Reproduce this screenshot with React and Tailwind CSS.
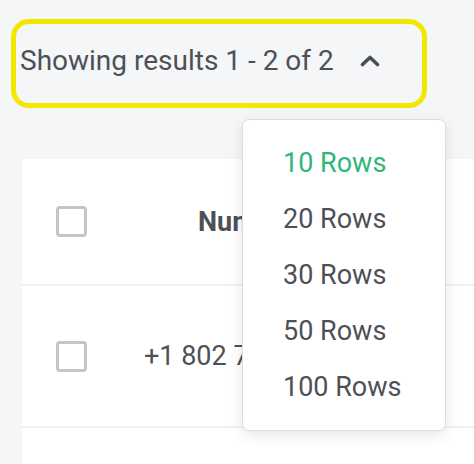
import { useState } from 'react';

const rowOptions = [10, 20, 30, 50, 100];

function Checkbox() {
    return <span className="block h-[31px] w-[31px] shrink-0 rounded-[4px] border-[3px] border-[#c3c5c9] bg-white" />;
}

function ChevronUp() {
    return (
        <svg width="20" height="12" viewBox="0 0 20 12" fill="none" className="shrink-0">
            <path d="M2.5 9.5 L10 2.5 L17.5 9.5" stroke="#4b4f55" strokeWidth="3.6" strokeLinecap="round" strokeLinejoin="round" />
        </svg>
    );
}

export default function App() {
    const [selected, setSelected] = useState(10);

    return (
        <div className="relative h-[464px] w-[474px] overflow-hidden bg-[#f5f6f8] font-['Roboto',sans-serif] text-[#4d5157]">
            {/* results summary + toggle */}
            <div className="flex h-[159px] items-start pl-[20px] pt-[43px]">
                <div className="flex items-center gap-[26px] text-[28px] leading-[36px]">
                    <span>Showing results 1 - 2 of 2</span>
                    <ChevronUp />
                </div>
            </div>

            {/* highlighter annotation */}
            <div className="pointer-events-none absolute left-[11px] top-[19px] h-[89px] w-[416px] rounded-[18px] border-[5px] border-[#f3e700]" />

            {/* table */}
            <div className="ml-[22px] w-[520px] bg-white">
                <div className="flex h-[127px] items-center border-b-2 border-[#eeeff1] pl-[34px]">
                    <Checkbox />
                    <span className="ml-[111px] text-[27px] font-bold leading-[32px]">Number</span>
                </div>
                <div className="flex h-[142px] items-center border-b-2 border-[#eeeff1] pl-[34px]">
                    <Checkbox />
                    <span className="ml-[57px] text-[27px] leading-[32px]">+1 802 723 4410</span>
                </div>
                <div className="h-[60px]" />
            </div>

            {/* rows per page menu */}
            <div className="absolute left-[242px] top-[119px] w-[204px] rounded-[7px] border border-[#dcdde0] bg-white py-[15px] shadow-[0_4px_14px_rgba(0,0,0,0.10)]">
                {rowOptions.map((n) => (
                    <button
                        key={n}
                        onClick={() => setSelected(n)}
                        className={`block w-full pl-[40px] text-left text-[27px] leading-[56px] ${n === selected ? 'text-[#2fb67a]' : 'text-[#4d5157]'}`}
                    >
                        {n} Rows
                    </button>
                ))}
            </div>
        </div>
    );
}
